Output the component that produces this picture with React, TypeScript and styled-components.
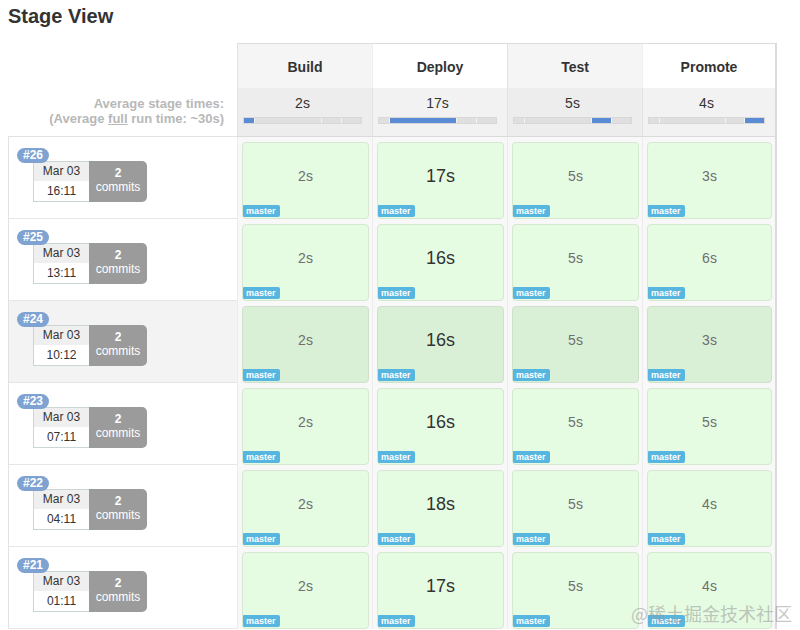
import React from 'react';
import styled, { createGlobalStyle } from 'styled-components';

const GlobalStyle = createGlobalStyle`
  body {
    margin: 0;
    background: #fff;
    font-family: "Liberation Sans", Arial, Helvetica, sans-serif;
    color: #333;
  }
`;

interface Stage {
  name: string;
  avg: string;
}

interface Run {
  id: number;
  date: string;
  time: string;
  durations: string[];
  hover?: boolean;
}

const STAGES: Stage[] = [
  { name: 'Build', avg: '2s' },
  { name: 'Deploy', avg: '17s' },
  { name: 'Test', avg: '5s' },
  { name: 'Promote', avg: '4s' },
];

// share of the full run each stage takes, as drawn in the average bars
const SEGMENTS = [9, 58, 16, 17];

const RUNS: Run[] = [
  { id: 26, date: 'Mar 03', time: '16:11', durations: ['2s', '17s', '5s', '3s'] },
  { id: 25, date: 'Mar 03', time: '13:11', durations: ['2s', '16s', '5s', '6s'] },
  { id: 24, date: 'Mar 03', time: '10:12', durations: ['2s', '16s', '5s', '3s'], hover: true },
  { id: 23, date: 'Mar 03', time: '07:11', durations: ['2s', '16s', '5s', '5s'] },
  { id: 22, date: 'Mar 03', time: '04:11', durations: ['2s', '18s', '5s', '4s'] },
  { id: 21, date: 'Mar 03', time: '01:11', durations: ['2s', '17s', '5s', '4s'] },
];

const LONGEST = 1;

export default function App() {
  return (
    <Page>
      <GlobalStyle />
      <Title>Stage View</Title>
      <Row>
        <BlankCell />
        {STAGES.map((stage, i) => (
          <StageHeader key={stage.name} alt={i % 2 === 0} last={i === STAGES.length - 1}>
            {stage.name}
          </StageHeader>
        ))}
      </Row>
      <Row>
        <AverageLabel>
          Average stage times:
          <br />
          (Average <u>full</u> run time: ~30s)
        </AverageLabel>
        {STAGES.map((stage, i) => (
          <AverageCell key={stage.name} alt={i % 2 === 0} last={i === STAGES.length - 1}>
            <AverageTime>{stage.avg}</AverageTime>
            <Track>
              {SEGMENTS.map((size, j) => (
                <Segment key={j} active={i === j} style={{ flexGrow: size }} />
              ))}
            </Track>
          </AverageCell>
        ))}
      </Row>
      {RUNS.map(run => (
        <Row key={run.id}>
          <BuildCell hover={run.hover}>
            <BuildInfo>
              <BuildBadge>#{run.id}</BuildBadge>
              <DateBox>
                <DateTop>{run.date}</DateTop>
                <DateBottom>{run.time}</DateBottom>
              </DateBox>
              <Commits>
                <strong>2</strong>
                <span>commits</span>
              </Commits>
            </BuildInfo>
          </BuildCell>
          {run.durations.map((d, i) => (
            <StageCell key={i} last={i === STAGES.length - 1}>
              <Card hover={run.hover}>
                <Duration big={i === LONGEST}>{d}</Duration>
                <BranchTag>master</BranchTag>
              </Card>
            </StageCell>
          ))}
        </Row>
      ))}
      <Watermark>@稀土掘金技术社区</Watermark>
    </Page>
  );
}

const Page = styled.div`
  position: relative;
  padding: 4px 8px 0;
  width: 784px;
  height: 626px;
  overflow: hidden;
`;

const Title = styled.h2`
  margin: 0 0 15px;
  font-size: 20px;
  line-height: 24px;
  font-weight: 700;
  color: #333;
`;

const Row = styled.div`
  display: grid;
  grid-template-columns: 229px repeat(4, 135px);
`;

const BlankCell = styled.div``;

const StageHeader = styled.div<{ alt?: boolean; last?: boolean }>`
  display: flex;
  align-items: center;
  justify-content: center;
  height: 45px;
  box-sizing: border-box;
  padding-top: 2px;
  border-top: 1px solid #dcdcdc;
  border-left: 1px solid ${p => (p.alt ? '#e2e2e2' : '#f0f0f0')};
  border-right: ${p => (p.last ? '2px solid #dadada' : 'none')};
  background: ${p => (p.alt ? '#f5f5f5' : '#fff')};
  font-size: 14px;
  font-weight: 700;
  color: #333;
`;

const AverageLabel = styled.div`
  padding: 8px 13px 0 0;
  text-align: right;
  font-size: 13px;
  line-height: 15px;
  font-weight: 700;
  color: #b8b8b8;
  border-bottom: 1px solid #e2e2e2;

  u {
    text-decoration-thickness: 1px;
  }
`;

const AverageCell = styled.div<{ alt?: boolean; last?: boolean }>`
  height: 49px;
  box-sizing: border-box;
  padding: 7px 10px 0 5px;
  border-left: 1px solid #e2e2e2;
  border-bottom: 1px solid #dadada;
  border-right: ${p => (p.last ? '2px solid #dadada' : 'none')};
  background: ${p => (p.alt ? '#ededed' : '#f2f2f2')};
`;

const AverageTime = styled.div`
  text-align: center;
  font-size: 14px;
  line-height: 16px;
  color: #333;
`;

const Track = styled.div`
  display: flex;
  gap: 1px;
  height: 5px;
  margin-top: 6px;
  background: #f4f4f4;
  border: 1px solid #d8d8d8;
`;

const Segment = styled.div<{ active?: boolean }>`
  flex-basis: 0;
  background: ${p => (p.active ? '#5b8bd4' : '#dfdfdf')};
`;

const BuildCell = styled.div<{ hover?: boolean }>`
  height: 82px;
  box-sizing: border-box;
  padding: 24px 0 0 24px;
  border-left: 1px solid #e2e2e2;
  border-bottom: 1px solid #e6e6e6;
  background: ${p => (p.hover ? '#f3f3f3' : '#fff')};
`;

const BuildInfo = styled.div`
  position: relative;
  display: flex;
  width: max-content;
`;

const BuildBadge = styled.div`
  position: absolute;
  top: -13px;
  left: -16px;
  z-index: 1;
  padding: 0 6px;
  height: 15px;
  line-height: 15px;
  border-radius: 8px;
  background: #7ea3d3;
  color: #fff;
  font-size: 12px;
  font-weight: 700;
`;

const DateBox = styled.div`
  width: 56px;
  height: 41px;
  box-sizing: border-box;
  border: 1px solid #c9d6d4;
  border-right: none;
  background: #fff;
  font-size: 12px;
  color: #333;
  text-align: center;
`;

const DateTop = styled.div`
  height: 19px;
  line-height: 18px;
  background: #efefef;
`;

const DateBottom = styled.div`
  line-height: 21px;
`;

const Commits = styled.div`
  display: flex;
  flex-direction: column;
  align-items: center;
  justify-content: center;
  width: 58px;
  height: 41px;
  padding-bottom: 3px;
  box-sizing: border-box;
  border-radius: 0 5px 5px 0;
  background: #9b9b9b;
  color: #fff;
  font-size: 12px;
  line-height: 14px;

  strong {
    font-weight: 700;
  }
`;

const StageCell = styled.div<{ last?: boolean }>`
  height: 82px;
  box-sizing: border-box;
  padding: 5px 3px 0 4px;
  border-left: 1px solid #ececec;
  border-right: ${p => (p.last ? '2px solid #dadada' : 'none')};
  background: #f8f8f8;
`;

const Card = styled.div<{ hover?: boolean }>`
  display: flex;
  flex-direction: column;
  height: 77px;
  box-sizing: border-box;
  border: 1px solid ${p => (p.hover ? '#cfe0cc' : '#d6e8d2')};
  border-radius: 4px;
  background: ${p => (p.hover ? '#daf0d6' : '#e5fbe2')};
  overflow: hidden;
`;

const Duration = styled.div<{ big?: boolean }>`
  flex: 1;
  display: flex;
  align-items: center;
  justify-content: center;
  padding-top: 4px;
  font-size: ${p => (p.big ? '18px' : '14px')};
  color: ${p => (p.big ? '#333' : '#6f6f6f')};
`;

const BranchTag = styled.div`
  align-self: flex-start;
  margin: 0 0 1px -1px;
  padding: 0 4px;
  height: 12px;
  line-height: 12px;
  border-radius: 2px;
  background: #56b6df;
  color: #fff;
  font-size: 9px;
  font-weight: 700;
`;

const Watermark = styled.div`
  position: absolute;
  right: 8px;
  bottom: 4px;
  font-family: "Noto Sans CJK SC", sans-serif;
  font-size: 18px;
  color: rgba(150, 150, 150, 0.55);
`;
